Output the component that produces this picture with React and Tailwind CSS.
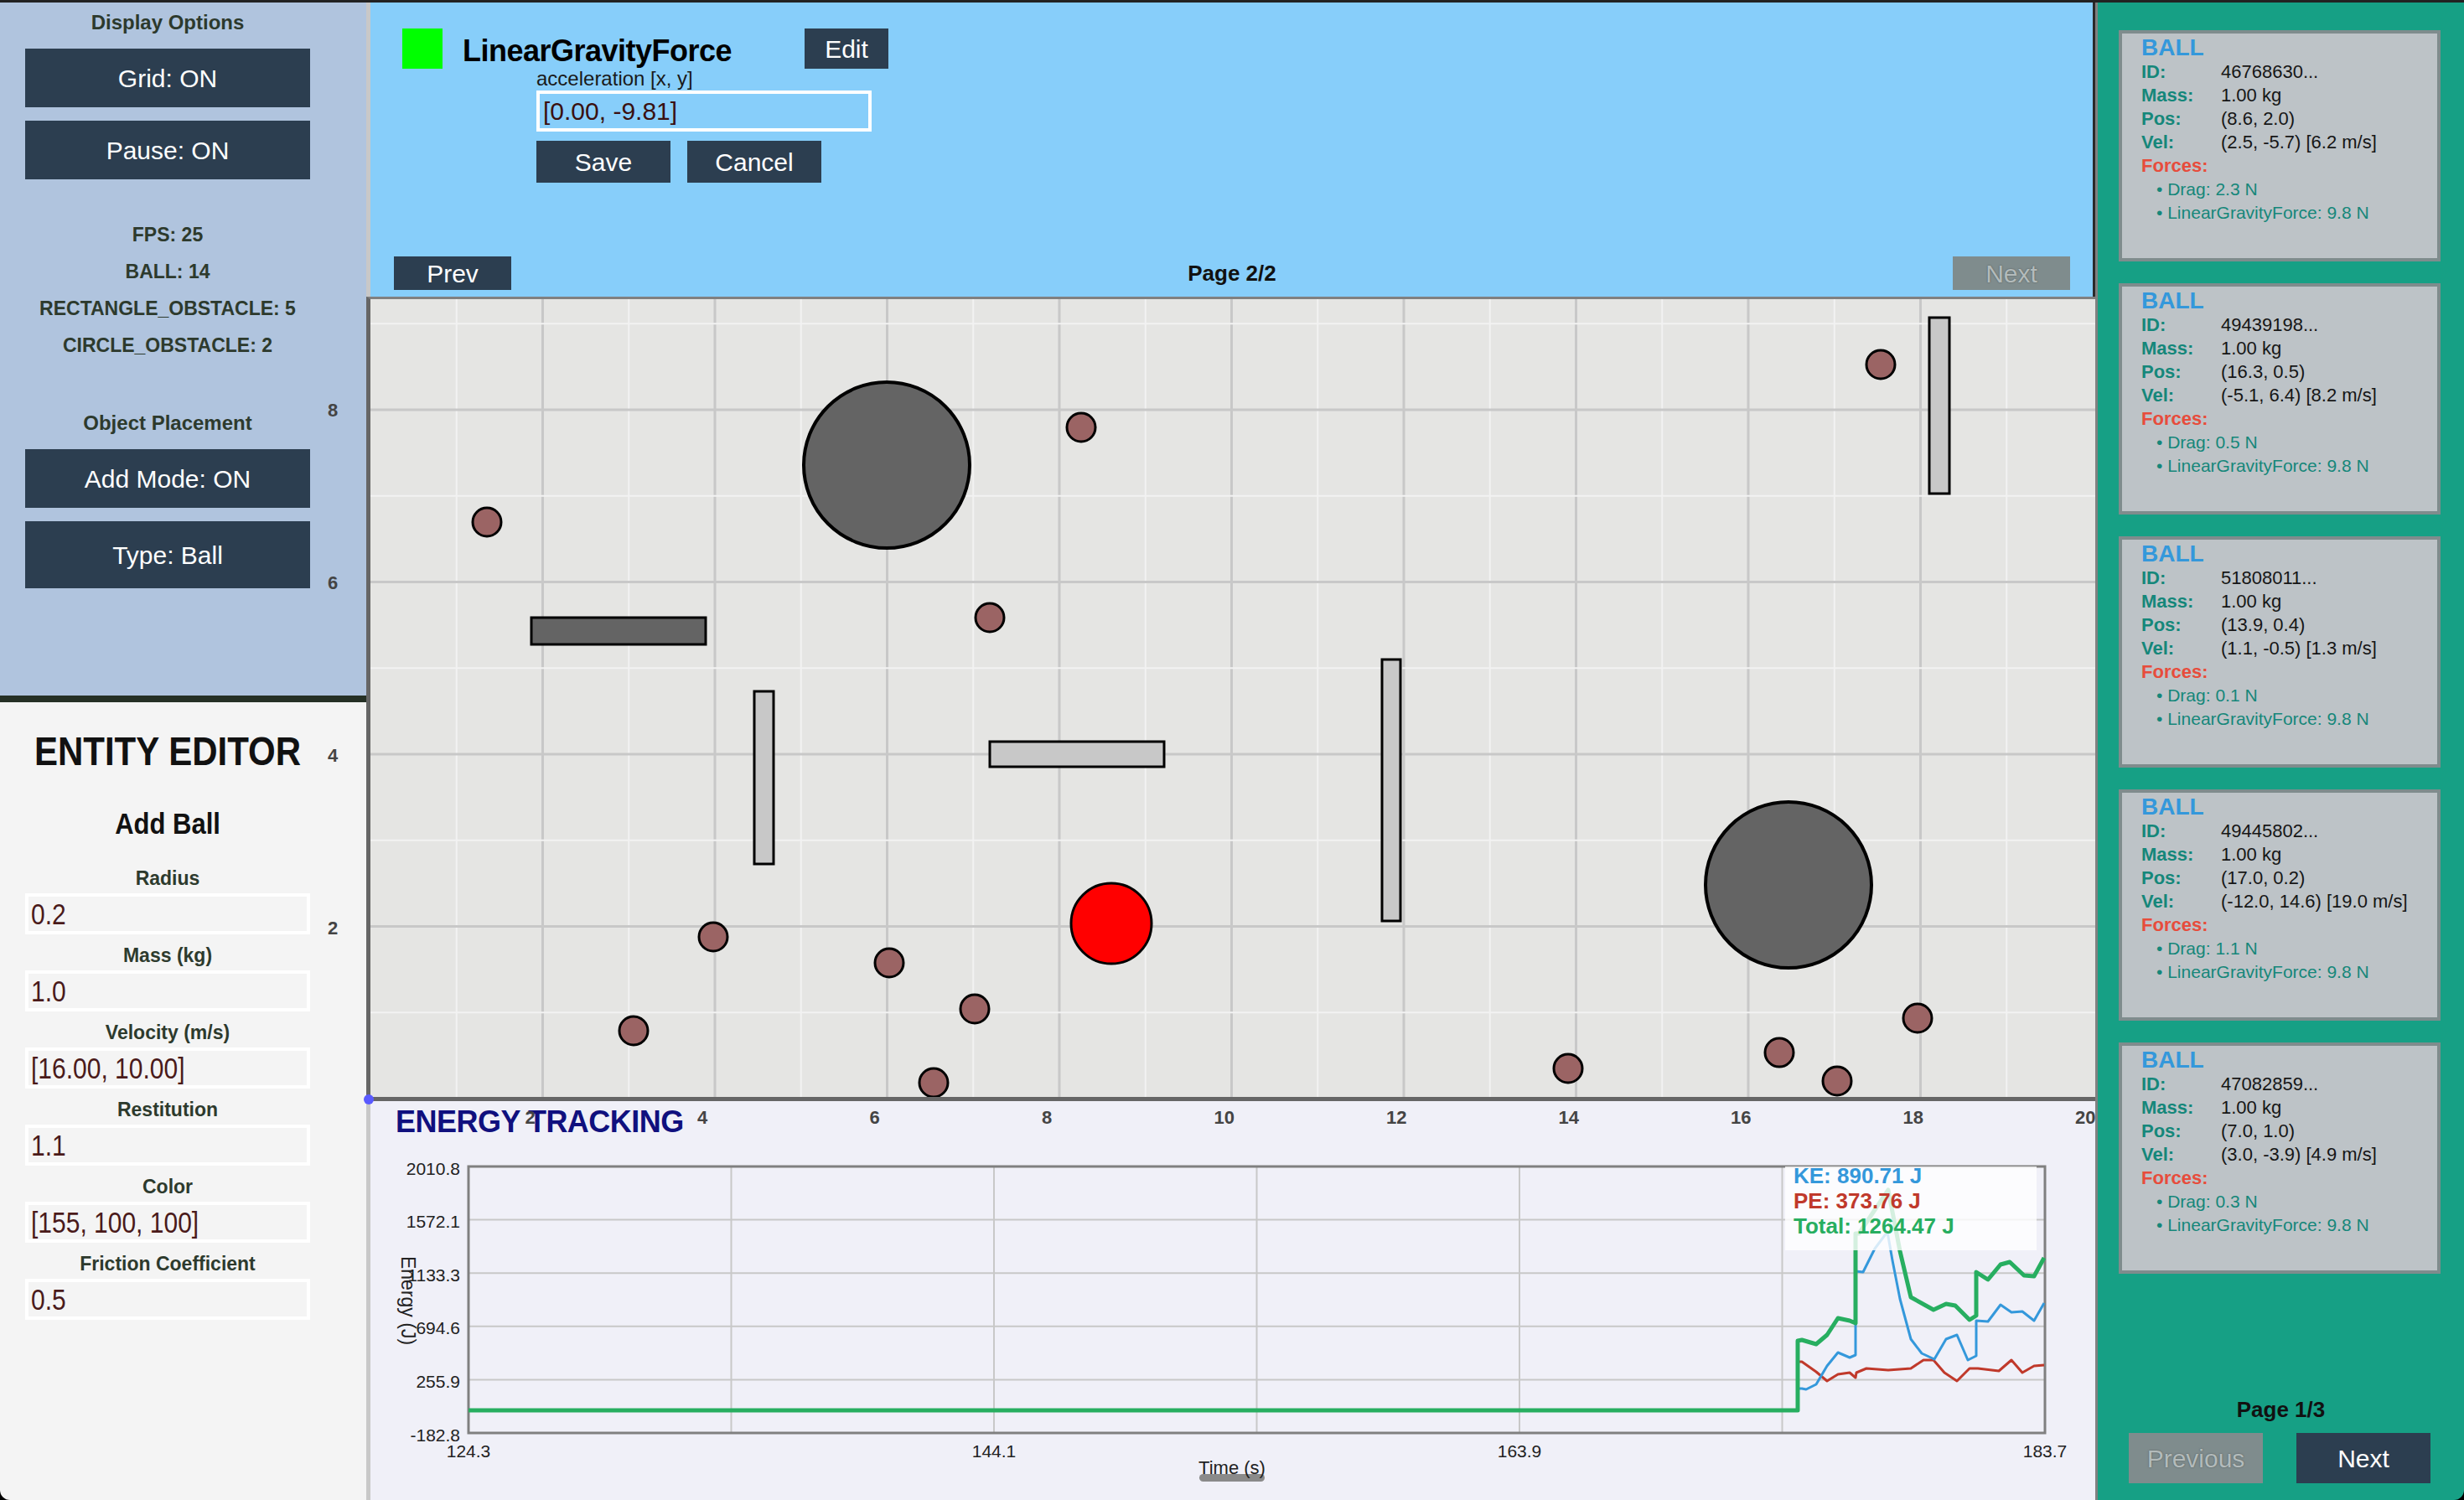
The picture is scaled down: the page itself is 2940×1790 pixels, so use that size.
import React from 'react';

const UNIT = 102.75;

const BALLS = [
  [139, 266], [848, 153], [739, 380], [1802, 78], [409, 761], [619, 792], [721, 847],
  [314, 873], [672, 935], [1429, 918], [1681, 899], [1750, 933], [1846, 858],
];

const RECTS = [
  { x: 192, y: 380, w: 208, h: 32, dark: true },
  { x: 458, y: 468, w: 23, h: 206 },
  { x: 739, y: 528, w: 208, h: 30 },
  { x: 1207, y: 430, w: 22, h: 312 },
  { x: 1860, y: 22, w: 24, h: 210 },
];

const CARDS = [
  { id: '46768630...', pos: '(8.6, 2.0)', vel: '(2.5, -5.7) [6.2 m/s]', drag: '2.3' },
  { id: '49439198...', pos: '(16.3, 0.5)', vel: '(-5.1, 6.4) [8.2 m/s]', drag: '0.5' },
  { id: '51808011...', pos: '(13.9, 0.4)', vel: '(1.1, -0.5) [1.3 m/s]', drag: '0.1' },
  { id: '49445802...', pos: '(17.0, 0.2)', vel: '(-12.0, 14.6) [19.0 m/s]', drag: '1.1' },
  { id: '47082859...', pos: '(7.0, 1.0)', vel: '(3.0, -3.9) [4.9 m/s]', drag: '0.3' },
];

const FIELDS = [
  ['Radius', '0.2'],
  ['Mass (kg)', '1.0'],
  ['Velocity (m/s)', '[16.00, 10.00]'],
  ['Restitution', '1.1'],
  ['Color', '[155, 100, 100]'],
  ['Friction Coefficient', '0.5'],
];

const TOTAL =
  '117,369 1703,369 1703,286 1708,285 1725,290 1738,279 1751,259 1765,262 1772,265 1772,158 1776,158 1811,106 1825,179 1838,234 1865,249 1880,242 1891,244 1908,261 1916,256 1916,204 1930,213 1945,195 1956,192 1973,208 1985,209 1997,187';
const KINETIC =
  '1703,369 1703,343 1708,343 1713,344 1725,338 1738,316 1751,300 1765,306 1772,303 1772,203 1781,204 1795,176 1810,156 1816,190 1825,236 1838,284 1851,301 1866,308 1880,284 1893,279 1906,309 1916,304 1916,262 1930,263 1945,243 1958,252 1971,251 1985,262 1997,241';
const POTENTIAL =
  '1703,369 1703,311 1708,311 1725,323 1738,334 1751,326 1765,324 1772,330 1773,324 1785,319 1811,321 1838,319 1853,309 1865,309 1878,324 1893,334 1908,319 1918,319 1943,322 1958,309 1971,324 1985,316 1997,315';

function DarkButton({ className = '', children }) {
  return (
    <div className={`flex items-center justify-center bg-[#2c3e50] text-[30px] text-white ${className}`}>
      {children}
    </div>
  );
}

function OffButton({ className = '', children }) {
  return (
    <div
      className={`flex items-center justify-center bg-[#7f8c8d] text-[30px] text-[#b3bbbb] [text-shadow:0_0_2px_#4d5656] ${className}`}
    >
      {children}
    </div>
  );
}

function BallCard({ card }) {
  const rows = [
    ['ID:', card.id],
    ['Mass:', '1.00 kg'],
    ['Pos:', card.pos],
    ['Vel:', card.vel],
  ];
  return (
    <div className="h-[276px] w-[384px] border-4 border-[#7f8c8d] bg-[#bdc3c7] pl-[23px] pt-[2px]">
      <div className="text-[28px] font-bold leading-[30px] text-[#3498db]">BALL</div>
      {rows.map(([label, value]) => (
        <div key={label} className="flex text-[22px] leading-[28px]">
          <span className="w-[95px] font-bold text-[#15877a]">{label}</span>
          <span className="text-[#161616]">{value}</span>
        </div>
      ))}
      <div className="text-[22px] font-bold leading-[28px] text-[#e74c3c]">Forces:</div>
      <div className="pl-[18px] text-[21px] leading-[28px] text-[#15877a]">• Drag: {card.drag} N</div>
      <div className="pl-[18px] text-[21px] leading-[28px] text-[#15877a]">• LinearGravityForce: 9.8 N</div>
    </div>
  );
}

function SimCanvas() {
  const cols = Array.from({ length: 19 }, (_, i) => i + 1);
  const rows = Array.from({ length: 9 }, (_, i) => i + 1);
  return (
    <svg width="2058" height="952" viewBox="0 0 2058 952" className="block">
      {cols.map((u) => (
        <line
          key={`c${u}`}
          x1={u * UNIT}
          x2={u * UNIT}
          y1="0"
          y2="952"
          stroke={u % 2 === 0 ? '#c8c8c8' : '#f2f2f2'}
          strokeWidth={u % 2 === 0 ? 3 : 2}
        />
      ))}
      {rows.map((v) => (
        <line
          key={`r${v}`}
          x1="0"
          x2="2058"
          y1={954 - v * UNIT}
          y2={954 - v * UNIT}
          stroke={v % 2 === 0 ? '#c8c8c8' : '#f2f2f2'}
          strokeWidth={v % 2 === 0 ? 3 : 2}
        />
      ))}
      {RECTS.map((r) => (
        <rect
          key={`${r.x}-${r.y}`}
          x={r.x}
          y={r.y}
          width={r.w}
          height={r.h}
          fill={r.dark ? '#646464' : '#c8c8c8'}
          stroke="#000"
          strokeWidth="3"
        />
      ))}
      <circle cx="616" cy="198" r="99" fill="#646464" stroke="#000" strokeWidth="4" />
      <circle cx="1692" cy="699" r="99" fill="#646464" stroke="#000" strokeWidth="4" />
      {BALLS.map(([x, y]) => (
        <circle key={`${x}-${y}`} cx={x} cy={y} r="17" fill="#9b6464" stroke="#000" strokeWidth="3" />
      ))}
      <circle cx="884" cy="745" r="48" fill="#ff0000" stroke="#000" strokeWidth="3" />
    </svg>
  );
}

function EnergyChart() {
  const yTicks = ['2010.8', '1572.1', '1133.3', '694.6', '255.9', '-182.8'];
  const xTicks = ['124.3', '144.1', '163.9', '183.7'];
  const axis = [2, 4, 6, 8, 10, 12, 14, 16, 18, 20];
  return (
    <svg width="2058" height="476" viewBox="0 0 2058 476" className="absolute inset-0">
      {[1, 2, 3, 4].map((k) => (
        <line key={`h${k}`} x1="117" x2="1998" y1={78 + 63.6 * k} y2={78 + 63.6 * k} stroke="#c8c8c8" strokeWidth="2" />
      ))}
      {[1, 2, 3, 4, 5].map((k) => (
        <line key={`v${k}`} x1={117 + 313.5 * k} x2={117 + 313.5 * k} y1="78" y2="396" stroke="#c8c8c8" strokeWidth="2" />
      ))}
      <rect x="117" y="78" width="1881" height="318" fill="none" stroke="#808080" strokeWidth="3" />
      {yTicks.map((t, k) => (
        <text key={t} x="107" y={78 + 63.6 * k + 4} textAnchor="end" dominantBaseline="middle" fontSize="21" fill="#222">
          {t}
        </text>
      ))}
      {xTicks.map((t, k) => (
        <text key={t} x={117 + 627 * k} y="419" textAnchor="middle" dominantBaseline="middle" fontSize="21" fill="#222">
          {t}
        </text>
      ))}
      <text x="43" y="238" transform="rotate(90 43 238)" textAnchor="middle" dominantBaseline="middle" fontSize="23" fill="#222">
        Energy (J)
      </text>
      <rect x="989" y="445" width="78" height="9" rx="4.5" fill="#8a8a8a" />
      <text x="1028" y="439" textAnchor="middle" dominantBaseline="middle" fontSize="22" fill="#222">
        Time (s)
      </text>
      <polyline points={POTENTIAL} fill="none" stroke="#c0392b" strokeWidth="3" strokeLinejoin="round" />
      <polyline points={KINETIC} fill="none" stroke="#3498db" strokeWidth="3" strokeLinejoin="round" />
      <polyline points={TOTAL} fill="none" stroke="#27ae60" strokeWidth="5" strokeLinejoin="round" />
      {axis.map((u) => (
        <text key={u} x={u * UNIT - 21} y="21" dominantBaseline="middle" fontSize="22" fontWeight="bold" fill="#444">
          {u}
        </text>
      ))}
    </svg>
  );
}

export default function App() {
  return (
    <div className="relative h-[1790px] w-[2940px] overflow-hidden bg-black font-['Liberation_Sans',Arial,sans-serif]">
      <div className="h-[3px] bg-[#222]" />
      <div className="flex h-[1787px]">
        {/* left: display options + entity editor */}
        <div className="relative flex w-[437px] flex-col overflow-visible">
          <div className="flex h-[827px] flex-col bg-[#b0c4de] pl-[30px]">
            <div className="mt-[10px] w-[340px] text-center text-[24px] font-bold leading-[28px] text-[#2d3a2d]">
              Display Options
            </div>
            <DarkButton className="mt-[17px] h-[70px] w-[340px]">Grid: ON</DarkButton>
            <DarkButton className="mt-[16px] h-[70px] w-[340px]">Pause: ON</DarkButton>
            <div className="mt-[44px] w-[340px] text-center text-[23px] font-bold leading-[44px] text-[#2d3a2d]">
              <div>FPS: 25</div>
              <div>BALL: 14</div>
              <div>RECTANGLE_OBSTACLE: 5</div>
              <div>CIRCLE_OBSTACLE: 2</div>
            </div>
            <div className="mt-[57px] w-[340px] text-center text-[24px] font-bold leading-[28px] text-[#2d3a2d]">
              Object Placement
            </div>
            <DarkButton className="mt-[17px] h-[70px] w-[340px]">Add Mode: ON</DarkButton>
            <DarkButton className="mt-[16px] h-[80px] w-[340px]">Type: Ball</DarkButton>
          </div>
          <div className="h-[8px] bg-[#253025]" />
          <div className="flex flex-1 flex-col rounded-bl-[12px] bg-[#f4f4f4] pl-[30px]">
            <div className="mt-[34px] w-[340px] text-center text-[42px] font-bold leading-[50px] text-[#111]">
              <span className="inline-block scale-y-[1.15]">ENTITY EDITOR</span>
            </div>
            <div className="mt-[44px] w-[340px] text-center text-[31px] font-bold leading-[36px] text-[#111]">
              <span className="inline-block scale-y-[1.12]">Add Ball</span>
            </div>
            <div className="mt-[32px] flex flex-col">
              {FIELDS.map(([label, value]) => (
                <div key={label} className="mb-[11px] w-[340px]">
                  <div className="text-center text-[23px] font-bold leading-[28px] text-[#2d3a2d]">{label}</div>
                  <div className="mt-[4px] h-[49px] border-4 border-white pl-[3px] text-[30px] leading-[41px] text-[#4a1a1a]">
                    <span className="inline-block scale-y-[1.15]">{value}</span>
                  </div>
                </div>
              ))}
            </div>
          </div>
          {[
            ['8', 487],
            ['6', 693],
            ['4', 899],
            ['2', 1105],
          ].map(([t, y]) => (
            <div
              key={t}
              className="absolute left-[387px] w-[20px] text-center text-[22px] font-bold leading-[26px] text-[#444]"
              style={{ top: y - 13 }}
            >
              {t}
            </div>
          ))}
        </div>

        {/* center: force editor, simulation, energy */}
        <div className="flex w-[2063px] flex-col">
          <div className="flex h-[351px] flex-col border-l-[5px] border-r-[3px] border-l-[#c8c8c8] border-r-[#2a2a2a] bg-[#87cefa]">
            <div className="mt-[31px] flex h-[48px] pl-[38px]">
              <div className="h-[48px] w-[48px] bg-[#00ff00]" />
              <div className="ml-[24px] mt-[3px] w-[408px] text-[36px] font-bold leading-[48px] tracking-[-0.5px] text-black">
                LinearGravityForce
              </div>
              <DarkButton className="h-[48px] w-[100px]">Edit</DarkButton>
            </div>
            <div className="ml-[198px] flex flex-col">
              <div className="h-[24px] text-[24px] leading-[24px] text-[#1a1a1a]">acceleration [x, y]</div>
              <div className="mt-[2px] h-[49px] w-[400px] border-4 border-white pl-[4px] text-[30px] leading-[41px] text-[#3a1010]">
                [0.00, -9.81]
              </div>
              <div className="mt-[11px] flex gap-[20px]">
                <DarkButton className="h-[50px] w-[160px]">Save</DarkButton>
                <DarkButton className="h-[50px] w-[160px]">Cancel</DarkButton>
              </div>
            </div>
            <div className="mt-[88px] flex items-center justify-between pl-[28px] pr-[27px]">
              <DarkButton className="h-[40px] w-[140px]">Prev</DarkButton>
              <div className="text-[26px] font-bold leading-[30px] text-[#111]">Page 2/2</div>
              <OffButton className="h-[40px] w-[140px]">Next</OffButton>
            </div>
          </div>
          <div className="h-[960px] border-b-[5px] border-l-[5px] border-t-[3px] border-b-[#666] border-l-[#666] border-t-[#808080] bg-[#e5e5e3]">
            <SimCanvas />
          </div>
          <div className="relative h-[476px] overflow-hidden border-l-[5px] border-l-[#c8c8c8] bg-[#f0f0f8]">
            <div className="pl-[30px] pt-[5px] text-[36px] font-bold leading-[40px] tracking-[-0.5px] text-[#10107e]">
              ENERGY TRACKING
            </div>
            <EnergyChart />
            <div className="absolute left-[1688px] top-[78px] h-[100px] w-[300px] bg-white/80 pl-[10px] text-[26px] font-bold leading-[30px]">
              <div className="-mt-[4px] text-[#3498db]">KE: 890.71 J</div>
              <div className="text-[#c0392b]">PE: 373.76 J</div>
              <div className="text-[#27ae60]">Total: 1264.47 J</div>
            </div>
          </div>
        </div>

        {/* right: entity list */}
        <div className="flex w-[440px] flex-col rounded-br-[12px] border-l-[3px] border-l-[#808080] bg-[#16a085]">
          <div className="flex flex-col gap-[26px] pl-[25px] pt-[33px]">
            {CARDS.map((card) => (
              <BallCard key={card.id} card={card} />
            ))}
          </div>
          <div className="flex-1" />
          <div className="text-center text-[26px] font-bold leading-[30px] text-[#111]">Page 1/3</div>
          <div className="mb-[20px] mt-[13px] flex gap-[40px] pl-[37px]">
            <OffButton className="h-[60px] w-[160px]">Previous</OffButton>
            <DarkButton className="h-[60px] w-[160px]">Next</DarkButton>
          </div>
        </div>
      </div>
      <div className="absolute left-[434px] top-[1306px] h-[12px] w-[12px] rounded-full bg-[#5a5aff]" />
    </div>
  );
}
